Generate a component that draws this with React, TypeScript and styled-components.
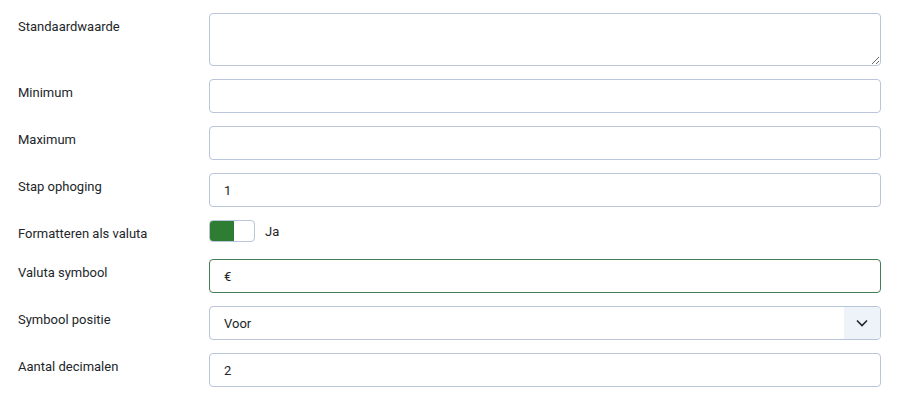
import React from "react";
import styled, { createGlobalStyle } from "styled-components";

const GlobalStyle = createGlobalStyle`
  body {
    margin: 0;
    background: #ffffff;
    font-family: "Roboto", "Noto Sans", sans-serif;
  }
`;

const Form = styled.div`
  padding: 13px 17px 0 18px;
  display: flex;
  flex-direction: column;
  gap: 13px;
`;

const Row = styled.div`
  display: grid;
  grid-template-columns: 191px 1fr;
  align-items: start;
`;

const Label = styled.label`
  font-size: 13px;
  line-height: 19px;
  padding-top: 4px;
  color: #22262a;
`;

const fieldBase = `
  box-sizing: border-box;
  width: 100%;
  border: 1px solid #b9c5da;
  border-radius: 4px;
  background: #fff;
  font-family: "Roboto", "Noto Sans", sans-serif;
  font-size: 13px;
  color: #22262a;
  padding: 0 14px;
  outline: none;
`;

const TextArea = styled.textarea`
  ${fieldBase}
  height: 53px;
  padding: 8px 14px;
  resize: vertical;
  display: block;
`;

const Input = styled.input<{ $focused?: boolean }>`
  ${fieldBase}
  height: 34px;
  display: block;
  border-color: ${(p) => (p.$focused ? "#457d54" : "#b9c5da")};
`;

const SelectBox = styled.div`
  ${fieldBase}
  height: 34px;
  padding: 0 0 0 14px;
  display: flex;
  align-items: center;
  overflow: hidden;
`;

const SelectValue = styled.span`
  flex: 1;
`;

const Chevron = styled.span`
  width: 36px;
  height: 100%;
  background: #eef2f9;
  display: flex;
  align-items: center;
  justify-content: center;
`;

const SwitchRow = styled.div`
  display: flex;
  align-items: center;
  gap: 10px;
  height: 22px;
  padding-bottom: 4px;
`;

const Switch = styled.span`
  box-sizing: border-box;
  width: 46px;
  height: 22px;
  border: 1px solid #b9c5da;
  border-radius: 4px;
  overflow: hidden;
  display: flex;
`;

const SwitchOn = styled.span`
  width: 24px;
  background: #2f7d32;
`;

const SwitchText = styled.span`
  font-size: 13px;
  color: #22262a;
`;

export default function App() {
  return (
    <>
      <GlobalStyle />
      <Form>
        <Row>
          <Label>Standaardwaarde</Label>
          <TextArea />
        </Row>
        <Row>
          <Label>Minimum</Label>
          <Input />
        </Row>
        <Row>
          <Label>Maximum</Label>
          <Input />
        </Row>
        <Row>
          <Label>Stap ophoging</Label>
          <Input defaultValue="1" />
        </Row>
        <Row>
          <Label>Formatteren als valuta</Label>
          <SwitchRow>
            <Switch>
              <SwitchOn />
            </Switch>
            <SwitchText>Ja</SwitchText>
          </SwitchRow>
        </Row>
        <Row>
          <Label>Valuta symbool</Label>
          <Input $focused defaultValue="€" />
        </Row>
        <Row>
          <Label>Symbool positie</Label>
          <SelectBox>
            <SelectValue>Voor</SelectValue>
            <Chevron>
              <svg width="12" height="8" viewBox="0 0 12 8" fill="none">
                <path d="M1 1.5l5 5 5-5" stroke="#22262a" strokeWidth="1.6" />
              </svg>
            </Chevron>
          </SelectBox>
        </Row>
        <Row>
          <Label>Aantal decimalen</Label>
          <Input defaultValue="2" />
        </Row>
      </Form>
    </>
  );
}
